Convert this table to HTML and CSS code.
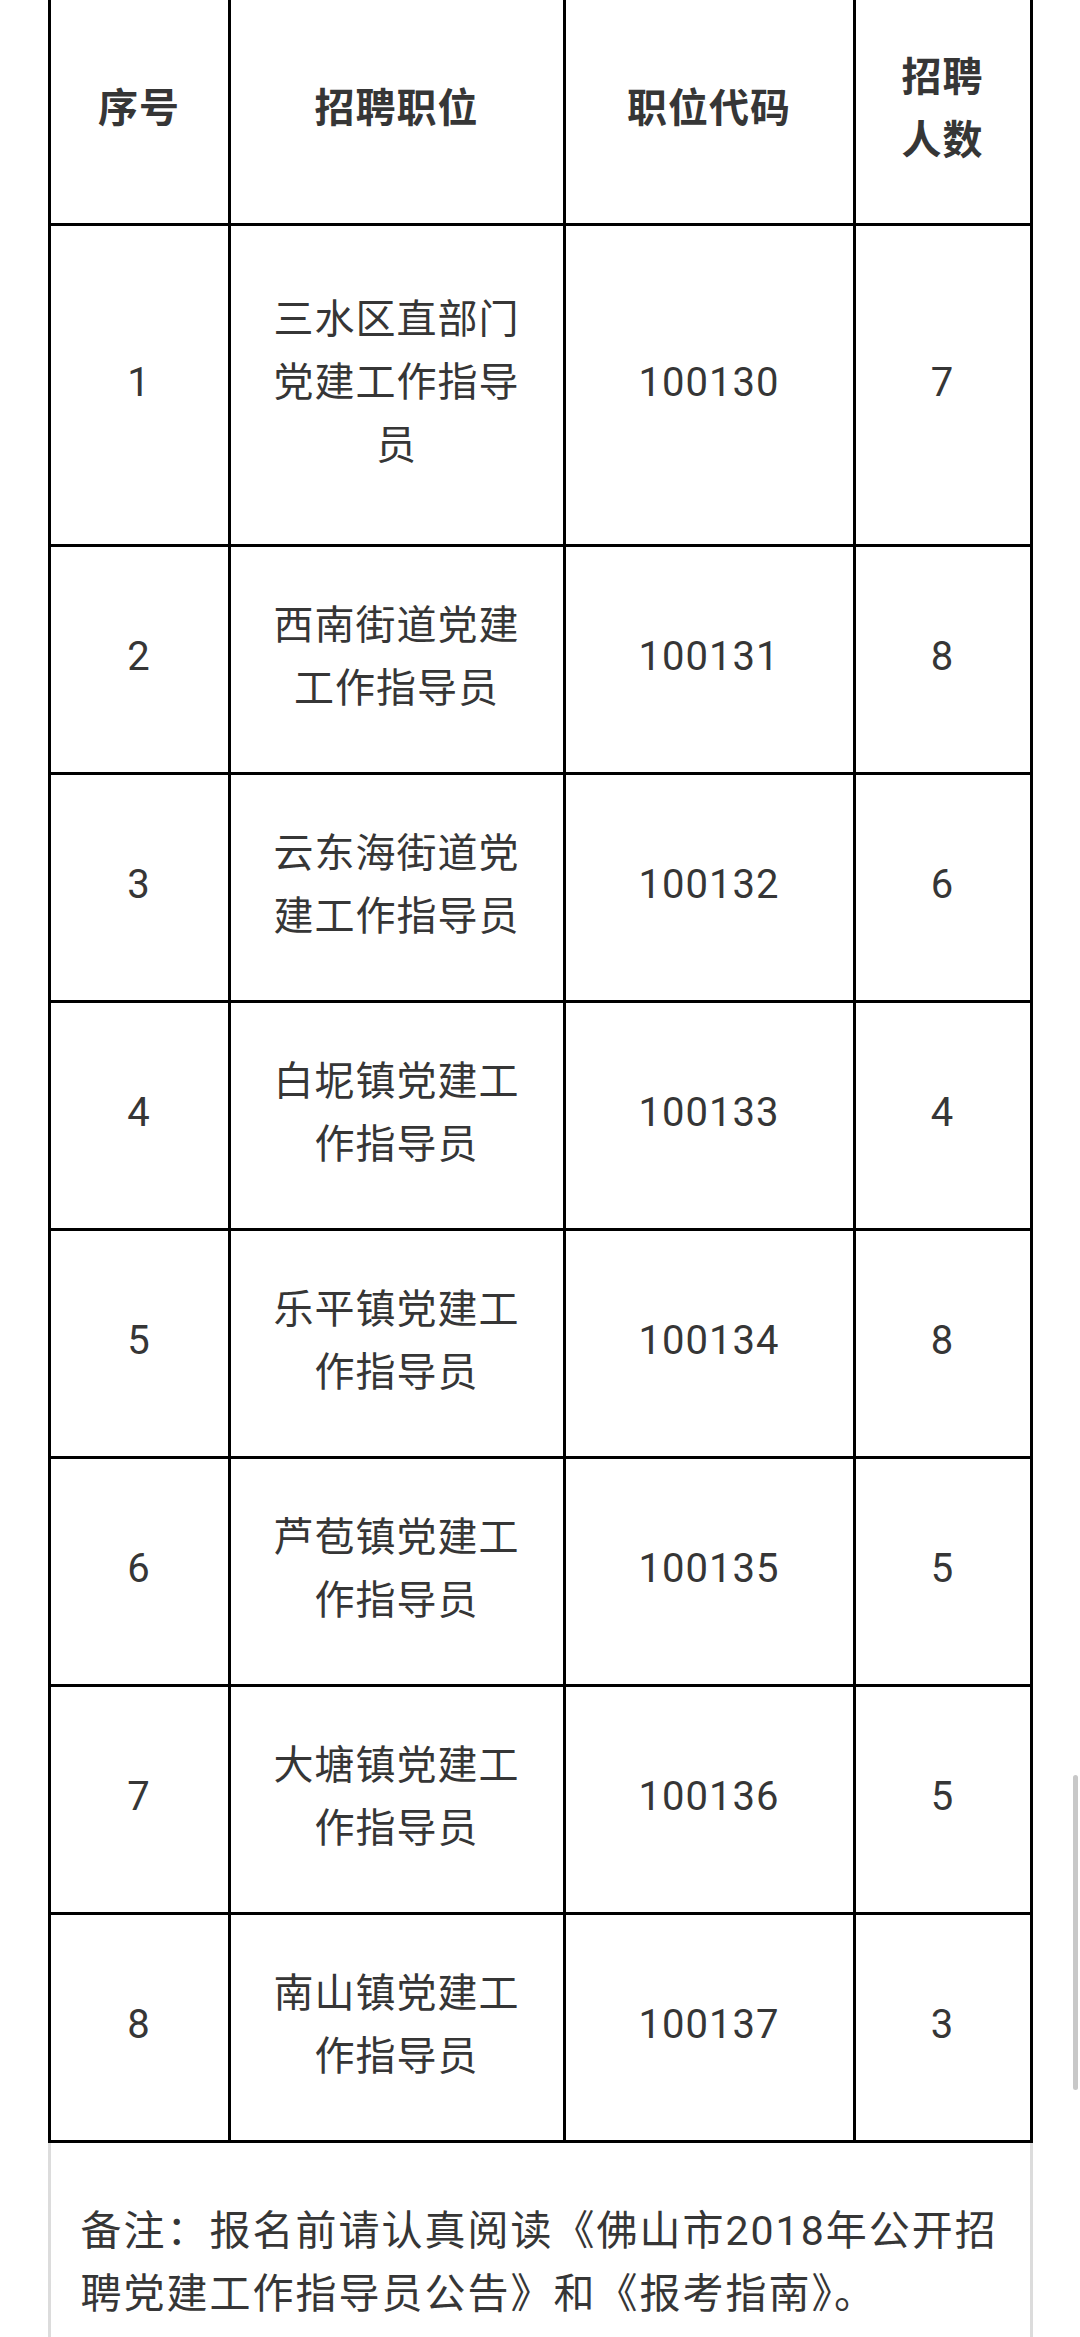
FILE: index.html
```html
<!DOCTYPE html>
<html lang="zh-CN">
<head>
<meta charset="utf-8">
<title>招聘职位表</title>
<link rel="stylesheet" href="styles.css">
</head>
<body>
<div class="page">
  <table class="jobs">
    <colgroup>
      <col class="c-no">
      <col class="c-pos">
      <col class="c-code">
      <col class="c-num">
    </colgroup>
    <tr class="head">
      <th>序号</th>
      <th>招聘职位</th>
      <th>职位代码</th>
      <th>招聘<br>人数</th>
    </tr>
    <tr class="tall">
      <td>1</td>
      <td class="pos">三水区直部门<br>党建工作指导<br>员</td>
      <td>100130</td>
      <td>7</td>
    </tr>
    <tr>
      <td>2</td>
      <td class="pos">西南街道党建<br>工作指导员</td>
      <td>100131</td>
      <td>8</td>
    </tr>
    <tr>
      <td>3</td>
      <td class="pos">云东海街道党<br>建工作指导员</td>
      <td>100132</td>
      <td>6</td>
    </tr>
    <tr>
      <td>4</td>
      <td class="pos">白坭镇党建工<br>作指导员</td>
      <td>100133</td>
      <td>4</td>
    </tr>
    <tr>
      <td>5</td>
      <td class="pos">乐平镇党建工<br>作指导员</td>
      <td>100134</td>
      <td>8</td>
    </tr>
    <tr>
      <td>6</td>
      <td class="pos">芦苞镇党建工<br>作指导员</td>
      <td>100135</td>
      <td>5</td>
    </tr>
    <tr>
      <td>7</td>
      <td class="pos">大塘镇党建工<br>作指导员</td>
      <td>100136</td>
      <td>5</td>
    </tr>
    <tr>
      <td>8</td>
      <td class="pos">南山镇党建工<br>作指导员</td>
      <td>100137</td>
      <td>3</td>
    </tr>
  </table>
  <div class="note">
    <p>备注：报名前请认真阅读《佛山市2018年公开招聘党建工作指导员公告》和《报考指南》。</p>
  </div>
</div>
<div class="scrollbar"></div>
</body>
</html>
```

FILE: styles.css
```css
html, body {
  margin: 0;
  padding: 0;
  background: #ffffff;
  overflow: hidden;
}

body {
  font-family: Roboto, "Noto Sans CJK SC", "Noto Sans", sans-serif;
  color: #363636;
}

.page {
  width: 985px;
  margin: -15px auto 0;
}

.jobs {
  width: 985px;
  table-layout: fixed;
  border-collapse: collapse;
  border: 3px solid #000000;
}

.c-no { width: 180px; }
.c-pos { width: 335px; }
.c-code { width: 290px; }
.c-num { width: 177px; }

.jobs th,
.jobs td {
  border: 3px solid #000000;
  padding: 0 0 6px;
  text-align: center;
  vertical-align: middle;
  font-size: 40px;
  line-height: 63px;
  letter-spacing: 1px;
  height: 219px;
}

.jobs th {
  font-weight: 700;
  padding: 6px 0 0;
  height: 229px;
}

.jobs tr.tall td {
  height: 312px;
}

.note {
  box-sizing: border-box;
  width: 985px;
  border-left: 3px solid #dcdcdc;
  border-right: 3px solid #dcdcdc;
  padding: 57px 28px 80px 30px;
}

.note p {
  margin: 0;
  font-size: 41px;
  line-height: 63px;
  letter-spacing: 2px;
}

.scrollbar {
  position: fixed;
  right: 2px;
  top: 1775px;
  width: 5px;
  height: 315px;
  border-radius: 3px;
  background: #c8c8c8;
}
```
